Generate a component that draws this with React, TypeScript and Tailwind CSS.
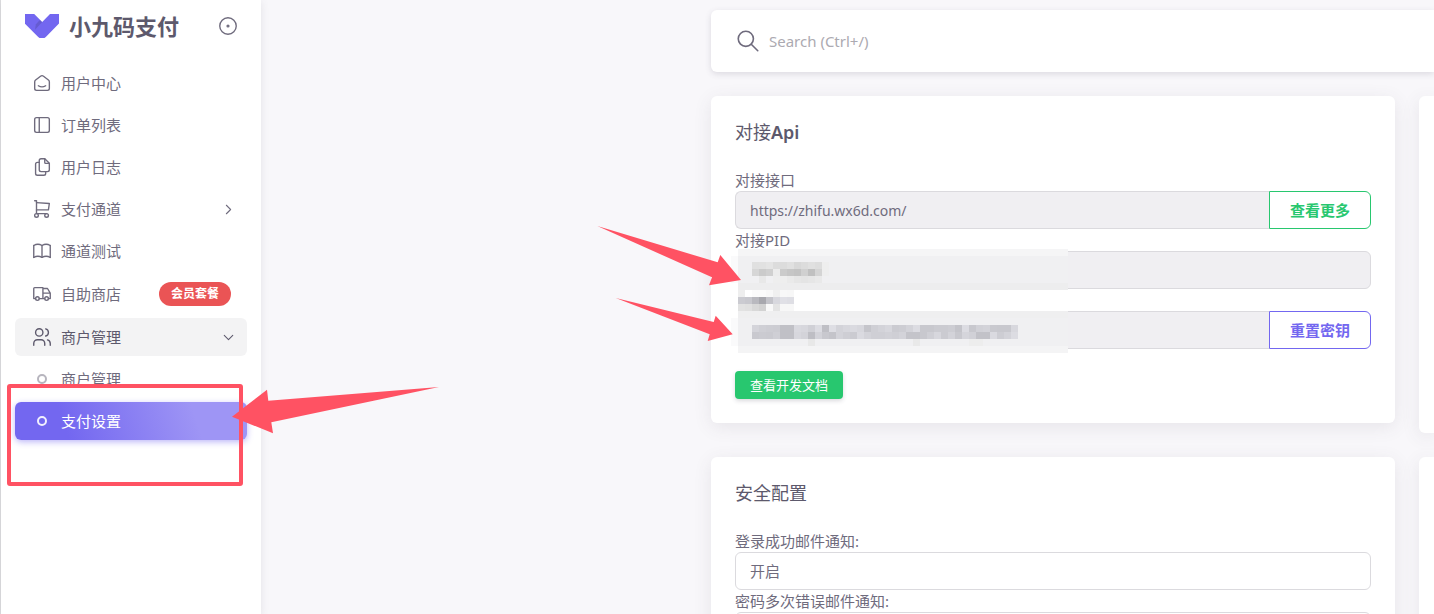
import { useId, type ReactNode } from "react";
import {
  TbSmartHome, TbLayoutSidebar, TbFiles, TbShoppingCart, TbBook, TbTruck, TbUsers,
  TbChevronRight, TbChevronDown, TbSearch, TbCircleDot,
} from "react-icons/tb";
import type { IconType } from "react-icons";

const CARD = "rounded-md bg-white shadow-[0_4px_18px_rgba(75,70,92,0.1)]";
const FIELD = "h-[38px] w-full min-w-0 border border-[#dbdade] px-3.5 text-[#6f6b7d] outline-none";

function Logo() {
  return (
    <svg width="34" height="24" viewBox="0 0 34 24" fill="none" aria-hidden="true">
      <path d="M0 0H9.200L17.200 8L25 0H34V9.500L20.800 23L19.500 24H14.500L13.200 23L0 9.800Z" fill="#7367f0" />
      <path d="M10 15.800L10.800 10.500L14.300 6.600L15.500 6.300L17.200 8Z" fill="#161616" fillOpacity="0.14" />
    </svg>
  );
}

function NavItem({ icon: Icon, label, badge, chevron, open }: { icon: IconType; label: string; badge?: string; chevron?: ReactNode; open?: boolean }) {
  return (
    <li>
      <a
        href="#"
        className={`flex items-center gap-2 rounded-md pl-4 ${badge ? "h-10" : "h-[38px]"} ${chevron ? "pr-2.5" : "pr-4"} ${open ? "bg-[#f3f3f4] text-[#5d596c]" : ""}`}
      >
        <Icon size={22} strokeWidth={1.5} />
        <span className="flex-1">{label}</span>
        {badge && <span className="rounded-full bg-[#ea5455] px-3 text-xs leading-6 font-semibold text-white">{badge}</span>}
        {chevron}
      </a>
    </li>
  );
}

function SubItem({ label, active }: { label: string; active?: boolean }) {
  return (
    <li>
      <a
        href="#"
        className={`flex h-[38px] items-center gap-2 rounded-md px-4 ${active ? "bg-linear-[72deg,#7367f0_22%,#9e95f5_77%] text-white shadow-[0_2px_6px_rgba(115,103,240,0.48)]" : ""}`}
      >
        <span className="flex w-[22px] justify-center">
          <span className={`size-2.5 rounded-full border-2 ${active ? "border-white/90" : "border-[#b7b5be]"}`} />
        </span>
        <span>{label}</span>
      </a>
    </li>
  );
}

function Field({ label, value, action, tone }: { label: string; value: string; action?: string; tone?: string }) {
  const id = useId();
  return (
    <div>
      <label htmlFor={id} className="block h-[22px] leading-[22px]">{label}</label>
      <div className="flex">
        <input id={id} readOnly defaultValue={value} className={`${FIELD} bg-[#f0eff2] text-sm ${action ? "rounded-l-md border-r-0" : "rounded-md"}`} />
        {action && (
          <button type="button" className={`h-[38px] shrink-0 rounded-r-md border px-5 font-semibold ${tone}`}>{action}</button>
        )}
      </div>
    </div>
  );
}

function Choice({ label }: { label: string }) {
  const id = useId();
  return (
    <div>
      <label htmlFor={id} className="block h-[22px] leading-[22px]">{label}</label>
      <select id={id} className={`${FIELD} appearance-none rounded-md bg-white`}>
        <option>开启</option>
        <option>关闭</option>
      </select>
    </div>
  );
}

const CELL = 7;

const BANDS = [
  { y: 249, h: 7, fill: "#f5f5f6" },
  { y: 256, h: 27, fill: "#f0f0f2" },
  { y: 283, h: 7, fill: "#ededee" },
  { y: 290, h: 21, fill: "#ffffff" },
  { y: 311, h: 7, fill: "#efeff0" },
  { y: 318, h: 28, fill: "#f0f0f2" },
  { y: 346, h: 7, fill: "#f4f4f5" },
];

// Each row lists the grey level of its cells, left to right; "--" leaves a cell clear.
const ROWS = [
  { x: 752, y: 262, cells: "e0 e1 e4 dc dc e0 d8 dc e0 dd ee" },
  { x: 752, y: 269, cells: "d6 cb d0 ec cb c6 c3 d0 c0 d4 ee" },
  { x: 752, y: 276, cells: "-- e8 -- ee ee ea e6 e4 e6 e9" },
  { x: 738, y: 290, cells: "ee ff fb fb f8 f0 f8 f7" },
  { x: 738, y: 297, cells: "d0 cc bd aa c8 dd e6 e4" },
  { x: 738, y: 304, cells: "e2 e0 d8 d2 f9 e4 f7 f7" },
  { x: 752, y: 325, cells: "d9 d4 d2 d1 c4 c4 df dc d5 e2 c3 e4 d8 dc e0 dc c9 d4 d8 dc d0 d2 d8 e2 cc cc d0 d0 d2 c8 e2 cc d6 d8 ce cc cc dd" },
  { x: 752, y: 332, cells: "ce d0 cf d4 c4 c4 dc d8 c2 d8 cc c8 d8 d3 d0 e0 d8 d4 d4 d6 d4 d8 c8 c8 cc d4 dc d0 d8 cc da d6 c6 c6 e0 d2 d8 e2" },
  { x: 752, y: 339, cells: "-- -- -- -- -- -- -- -- e8 -- -- -- -- -- -- -- -- -- -- -- -- -- -- e9 -- -- -- -- -- -- -- ed ed" },
];

function Annotations() {
  return (
    <svg className="pointer-events-none absolute top-0 left-0" width="1434" height="614" aria-hidden="true">
      <g shapeRendering="crispEdges">
        <rect x="731" y="251" width="7" height="102" fill="#ffffff" />
        <rect x="731" y="256" width="7" height="27" fill="#fafafb" />
        <rect x="731" y="318" width="7" height="28" fill="#fafafb" />
        {BANDS.map((b) => <rect key={b.y} x="738" y={b.y} width="330" height={b.h} fill={b.fill} />)}
        {ROWS.map((row) =>
          row.cells.split(" ").map((v, i) =>
            v === "--" ? null : (
              <rect key={`${row.y}-${i}`} x={row.x + i * CELL} y={row.y} width={CELL} height={CELL} fill={`#${v}${v}${v}`} />
            ),
          ),
        )}
        {ROWS.filter((row) => row.y === 297 || row.y === 325 || row.y === 332).map((row) => (
          <rect key={row.y} x={row.x} y={row.y} width={row.cells.split(" ").length * CELL} height={CELL} fill="#9080f0" fillOpacity="0.06" />
        ))}
      </g>
      <g fill="#ff5263">
        <path d="M439 387L268.300 400.700L267 389.700L232 416.700L273 433.300L271.300 422.300Z" />
        <path d="M597.300 226L717.700 262.300L720.300 255L741 280L709 285.300L712 277.300Z" />
        <path d="M615.700 298L713.700 322L715.700 315.700L732.700 334.300L707.700 341L709.700 334.300Z" />
      </g>
      <rect x="9" y="386" width="232" height="98" rx="1" fill="none" stroke="#ff5263" strokeWidth="4" />
    </svg>
  );
}

export default function App() {
  return (
    <div className="relative overflow-hidden font-['Noto_Sans','Noto_Sans_CJK_SC',sans-serif] text-[15px] leading-[22px] text-[#6f6b7d]">
      <div className="flex h-screen border-l border-[#dedee0] bg-[#f8f7fa]">
        <aside className="w-[260px] shrink-0 bg-white shadow-[0_2px_8px_rgba(75,70,92,0.12)]">
          <header className="flex h-[52px] items-center gap-2.5 pl-6 pr-[22px]">
            <Logo />
            <span className="flex-1 text-[22px] font-bold text-[#5d596c]">小九码支付</span>
            <button type="button" aria-label="固定菜单"><TbCircleDot size={22} strokeWidth={1.5} /></button>
          </header>
          <nav className="px-3.5 pt-3">
            <ul className="flex flex-col gap-1">
              <NavItem icon={TbSmartHome} label="用户中心" />
              <NavItem icon={TbLayoutSidebar} label="订单列表" />
              <NavItem icon={TbFiles} label="用户日志" />
              <NavItem icon={TbShoppingCart} label="支付通道" chevron={<TbChevronRight size={17} strokeWidth={1.5} />} />
              <NavItem icon={TbBook} label="通道测试" />
              <NavItem icon={TbTruck} label="自助商店" badge="会员套餐" />
              <NavItem icon={TbUsers} label="商户管理" open chevron={<TbChevronDown size={17} strokeWidth={1.5} />} />
              <SubItem label="商户管理" />
              <SubItem label="支付设置" active />
            </ul>
          </nav>
        </aside>

        <main className="min-w-0 flex-1 overflow-hidden pt-2.5 pl-[449px]">
          <div className="pl-px">
            <label className="flex h-[62px] items-center gap-2 rounded-l-md bg-white px-6 shadow-[0_2px_6px_rgba(75,70,92,0.16)]">
              <TbSearch size={26} strokeWidth={1.5} />
              <input aria-label="Search" placeholder="Search (Ctrl+/)" className="flex-1 outline-none placeholder:text-[#acaab1]" />
            </label>
            <div className="mt-6 flex gap-6">
              <div className="flex min-w-0 flex-1 flex-col gap-[34px]">
                <section className={`${CARD} p-6`}>
                  <h2 className="mb-[25px] text-lg leading-6 text-[#5d596c]">对接<span className="font-semibold">Api</span></h2>
                  <Field label="对接接口" value="https://zhifu.wx6d.com/" action="查看更多" tone="border-[#28c76f] text-[#28c76f]" />
                  <Field label="对接PID" value="" />
                  <Field label="对接密钥" value="" action="重置密钥" tone="border-[#7367f0] text-[#7367f0]" />
                  <button type="button" className="mt-[22px] block h-7 rounded-sm bg-[#28c76f] px-[15px] text-[13px] text-white shadow-[0_2px_4px_rgba(75,70,92,0.2)]">查看开发文档</button>
                </section>
                <section className={`${CARD} p-6`}>
                  <h2 className="mb-[25px] text-lg leading-6 text-[#5d596c]">安全配置</h2>
                  <Choice label="登录成功邮件通知:" />
                  <Choice label="密码多次错误邮件通知:" />
                </section>
              </div>
              <div className="flex w-[15px] shrink-0 flex-col gap-6">
                <section className="h-[337px] rounded-l-md bg-white shadow-[0_4px_18px_rgba(75,70,92,0.1)]" />
                <section className="h-[337px] rounded-l-md bg-white shadow-[0_4px_18px_rgba(75,70,92,0.1)]" />
              </div>
            </div>
          </div>
        </main>
      </div>
      <Annotations />
    </div>
  );
}
